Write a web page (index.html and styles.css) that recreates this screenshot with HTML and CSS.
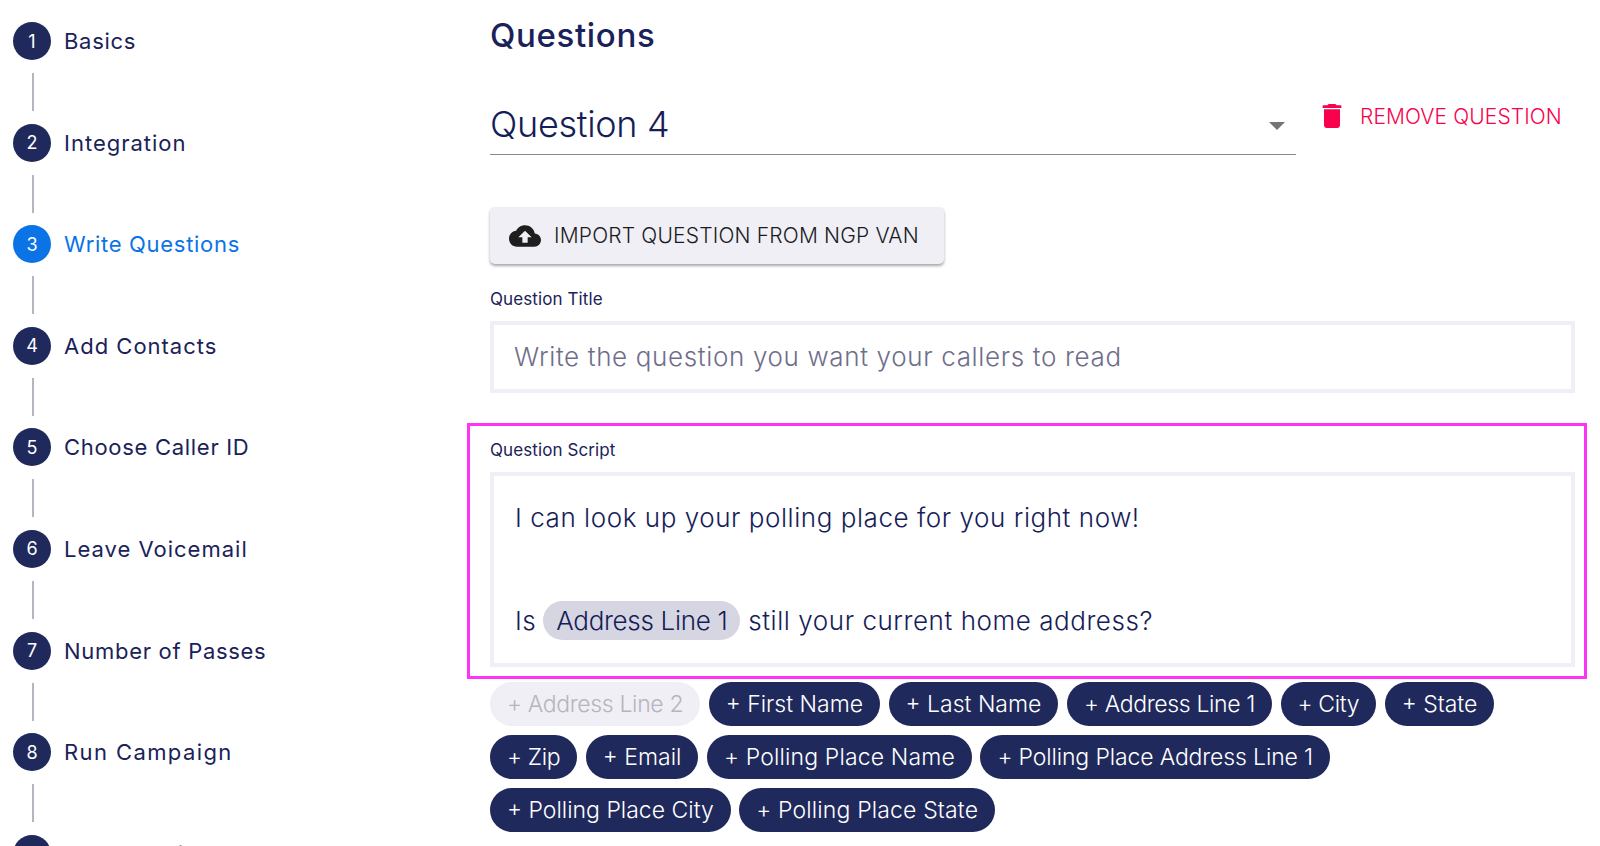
FILE: index.html
```html
<!DOCTYPE html>
<html lang="en">
<head>
<meta charset="utf-8">
<title>Write Questions</title>
<link rel="stylesheet" href="styles.css">
</head>
<body>
<div class="page">
  <nav class="stepper">
    <div class="step"><span class="num">1</span><span class="step-label">Basics</span></div>
    <div class="line"></div>
    <div class="step wide"><span class="num">2</span><span class="step-label">Integration</span></div>
    <div class="line"></div>
    <div class="step active"><span class="num">3</span><span class="step-label">Write Questions</span></div>
    <div class="line"></div>
    <div class="step wide"><span class="num">4</span><span class="step-label">Add Contacts</span></div>
    <div class="line"></div>
    <div class="step"><span class="num">5</span><span class="step-label">Choose Caller ID</span></div>
    <div class="line"></div>
    <div class="step wide"><span class="num">6</span><span class="step-label">Leave Voicemail</span></div>
    <div class="line"></div>
    <div class="step"><span class="num">7</span><span class="step-label">Number of Passes</span></div>
    <div class="line"></div>
    <div class="step wider"><span class="num">8</span><span class="step-label">Run Campaign</span></div>
    <div class="line"></div>
    <div class="step"><span class="num">9</span><span class="step-label">Phone Script</span></div>
  </nav>
  <main class="content">
    <h1 class="title">Questions</h1>
    <div class="select-row">
      <div class="select"><span class="select-value">Question 4</span><span class="caret"></span></div>
      <button class="remove" type="button">
        <svg class="trash" viewBox="0 0 24 24"><path d="M6 19c0 1.1.9 2 2 2h8c1.1 0 2-.9 2-2V7H6v12zM19 4h-3.5l-1-1h-5l-1 1H5v2h14V4z"/></svg>
        <span>REMOVE QUESTION</span>
      </button>
    </div>
    <button class="import" type="button">
      <svg class="cloud" viewBox="0 0 24 24"><path d="M19.35 10.04C18.67 6.59 15.64 4 12 4 9.11 4 6.6 5.64 5.35 8.04 2.34 8.36 0 10.91 0 14c0 3.31 2.69 6 6 6h13c2.76 0 5-2.24 5-5 0-2.64-2.05-4.78-4.65-4.96zM14 13v4h-4v-4H7l5-5 5 5h-3z"/></svg>
      <span>IMPORT QUESTION FROM NGP VAN</span>
    </button>
    <label class="field-label">Question Title</label>
    <div class="input placeholder">Write the question you want your callers to read</div>
    <section class="highlight">
      <label class="field-label">Question Script</label>
      <div class="editor">
        <p class="line-one">I can look up your polling place for you right now!</p>
        <p class="line-two">Is <span class="token">Address Line 1</span> still your current home address?</p>
      </div>
    </section>
    <div class="chips">
      <span class="chip off tight">+ Address Line 2</span>
      <span class="chip">+ First Name</span>
      <span class="chip">+ Last Name</span>
      <span class="chip tight">+ Address Line 1</span>
      <span class="chip tight">+ City</span>
      <span class="chip">+ State</span>
      <span class="chip tight">+ Zip</span>
      <span class="chip">+ Email</span>
      <span class="chip loose">+ Polling Place Name</span>
      <span class="chip snug">+ Polling Place Address Line 1</span>
      <span class="chip">+ Polling Place City</span>
      <span class="chip loose">+ Polling Place State</span>
    </div>
  </main>
</div>
</body>
</html>
```

FILE: styles.css
```css
* { box-sizing: border-box; }
html, body { margin: 0; height: 846px; overflow: hidden; background: #fff; }
body { font-family: Inter, "Liberation Sans", sans-serif; color: #1a2259; }
.page { display: flex; height: 846px; overflow: hidden; }

.stepper { width: 490px; flex: none; padding: 22px 0 0 13px; }
.step { display: flex; align-items: center; height: 38px; gap: 13px; font-size: 22px; font-weight: 400; letter-spacing: 0.7px; color: #1a2259; }
.step.wide { letter-spacing: 1px; }
.step.wider { letter-spacing: 1.4px; }
.num { width: 38px; height: 38px; flex: none; border-radius: 50%; background: #20295c; color: #fff; font-size: 18px; font-weight: 400; display: flex; align-items: center; justify-content: center; letter-spacing: 0; }
.step.active { color: #0a74e6; }
.step.active .num { background: #0a74e6; }
.line { width: 1.5px; height: 38px; margin: 13px 0 12.6px 19px; background: #b5b5c2; }

.content { flex: none; width: 1110px; display: flex; flex-direction: column; align-items: flex-start; }
.title { margin: 13px 0 0; font-size: 33px; line-height: 44px; font-weight: 500; color: #1a2259; letter-spacing: 0.65px; }
.select-row { display: flex; align-items: flex-start; margin-top: 28px; }
.select { width: 806px; height: 70px; border-bottom: 1px solid #8a8a8a; display: flex; align-items: center; justify-content: space-between; padding: 9px 11px 0 0; }
.select-value { font-size: 36px; font-weight: 300; line-height: 58px; letter-spacing: -0.3px; color: #161d57; }
.caret { width: 0; height: 0; border-left: 8px solid transparent; border-right: 8px solid transparent; border-top: 8px solid #757575; margin-top: 4px; }
.remove { display: flex; align-items: center; gap: 12px; margin: 15px 0 0 20px; padding: 0; height: 32px; background: none; border: 0; color: #f8024e; font: 300 21px Inter, "Liberation Sans", sans-serif; letter-spacing: 0.1px; white-space: nowrap; }
.trash { width: 32px; height: 32px; fill: #f8024e; flex: none; }

.import { display: flex; align-items: center; gap: 13px; margin-top: 52px; width: 454px; height: 57px; padding: 0 0 0 19px; background: #efeff5; border: 0; border-radius: 5px; box-shadow: 0 2px 3px rgba(0,0,0,.35); color: #1b1b1f; font: 300 21px Inter, "Liberation Sans", sans-serif; letter-spacing: 0.18px; white-space: nowrap; }
.cloud { width: 32px; height: 32px; fill: #1e1e1e; flex: none; }

.field-label { display: block; font-size: 17px; font-weight: 400; line-height: 22px; letter-spacing: 0.1px; color: #1a2259; }
.import + .field-label { margin-top: 24px; }
.input { width: 1085px; height: 72px; margin-top: 11px; border: 4px solid #efeff5; padding: 0 20px 2px; display: flex; align-items: center; font-size: 26px; font-weight: 300; letter-spacing: 0.65px; }
.placeholder { color: #6f6e8a; }

.highlight { width: 1120px; height: 256px; margin: 30px 0 0 -23px; border: 3px solid #ff33f5; padding: 13px 0 0 20px; flex: none; }
.editor { width: 1085px; height: 195px; margin-top: 11px; border: 4px solid #efeff5; padding: 23px 21px 0; font-size: 26px; font-weight: 300; letter-spacing: 0.55px; color: #161d57; }
.editor p { margin: 0; line-height: 38px; }
.line-two { margin-top: 64px !important; white-space: nowrap; }
.token { display: inline-block; background: #d6d6e2; border-radius: 20px; padding: 0 13px; margin: 0 0 0 -1px; line-height: 39px; letter-spacing: -0.3px; }

.chips { display: flex; flex-wrap: wrap; gap: 9px 8.5px; width: 1085px; margin-top: 3px; }
.chip { display: inline-flex; align-items: center; height: 44px; padding: 0 17px; border-radius: 23px; background: #20295c; color: #fff; font-size: 23px; font-weight: 300; letter-spacing: 0; white-space: nowrap; }
.chip.tight { letter-spacing: -0.35px; }
.chip.snug { letter-spacing: -0.14px; }
.chip.loose { letter-spacing: 0.15px; }
.chip.off { background: #efeff5; color: #b5b5c0; }
```
